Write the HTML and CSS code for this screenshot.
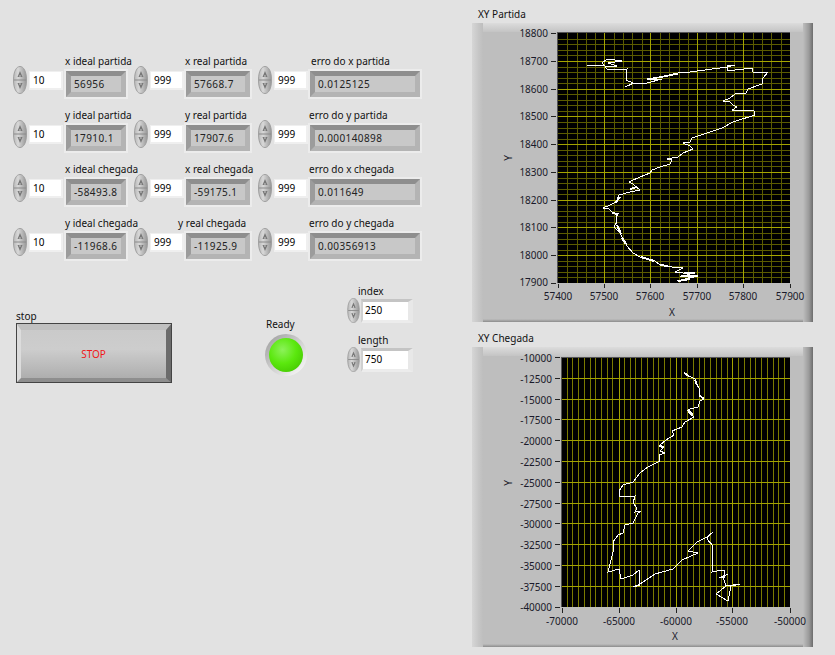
FILE: index.html
```html
<!DOCTYPE html>
<html lang="pt">
<head>
<meta charset="utf-8">
<title>XY Partida / XY Chegada</title>
<link rel="stylesheet" href="styles.css">
</head>
<body>
<svg class="defs" width="0" height="0" aria-hidden="true">
  <defs>
    <linearGradient id="spinfill" x1="0" x2="1" y1="0" y2="0">
      <stop offset="0" stop-color="#b8b8b8"/><stop offset=".35" stop-color="#d8d8d8"/><stop offset="1" stop-color="#969696"/>
    </linearGradient>
    <symbol id="spin" viewBox="0 0 14 28">
      <path d="M7 .5C10.500 .5 13.500 5 13.500 14S10.500 27.500 7 27.500 .5 23 .5 14 3.500 .5 7 .5Z" fill="url(#spinfill)" stroke="#a0a0a0"/>
      <path d="M1 14H13" stroke="#8a8a8a"/>
      <path d="M7 5 4.500 11H6.500V9H7.500V11H9.500Z" fill="#777"/>
      <path d="M7 23 4.500 17H6.500V19H7.500V17H9.500Z" fill="#777"/>
    </symbol>
  </defs>
</svg>
<main class="panel">
  <section class="left">
    <div class="controls">
      <div class="num"><svg class="spin"><use href="#spin"/></svg><span class="box">10</span></div>
      <div class="ind"><span class="lab">x ideal partida</span><output class="read r1">56956</output></div>
      <div class="num"><svg class="spin"><use href="#spin"/></svg><span class="box">999</span></div>
      <div class="ind"><span class="lab">x real partida</span><output class="read r2">57668.7</output></div>
      <div class="num"><svg class="spin"><use href="#spin"/></svg><span class="box">999</span></div>
      <div class="ind"><span class="lab off3">erro do x partida</span><output class="read r3">0.0125125</output></div>

      <div class="num"><svg class="spin"><use href="#spin"/></svg><span class="box">10</span></div>
      <div class="ind"><span class="lab">y ideal partida</span><output class="read r1">17910.1</output></div>
      <div class="num"><svg class="spin"><use href="#spin"/></svg><span class="box">999</span></div>
      <div class="ind"><span class="lab">y real partida</span><output class="read r2">17907.6</output></div>
      <div class="num"><svg class="spin"><use href="#spin"/></svg><span class="box">999</span></div>
      <div class="ind"><span class="lab">erro do y partida</span><output class="read r3">0.000140898</output></div>

      <div class="num"><svg class="spin"><use href="#spin"/></svg><span class="box">10</span></div>
      <div class="ind"><span class="lab">x ideal chegada</span><output class="read r1">-58493.8</output></div>
      <div class="num"><svg class="spin"><use href="#spin"/></svg><span class="box">999</span></div>
      <div class="ind"><span class="lab">x real chegada</span><output class="read r2">-59175.1</output></div>
      <div class="num"><svg class="spin"><use href="#spin"/></svg><span class="box">999</span></div>
      <div class="ind"><span class="lab">erro do x chegada</span><output class="read r3">0.011649</output></div>

      <div class="num"><svg class="spin"><use href="#spin"/></svg><span class="box">10</span></div>
      <div class="ind"><span class="lab">y ideal chegada</span><output class="read r1">-11968.6</output></div>
      <div class="num"><svg class="spin"><use href="#spin"/></svg><span class="box">999</span></div>
      <div class="ind"><span class="lab off2">y real chegada</span><output class="read r2">-11925.9</output></div>
      <div class="num"><svg class="spin"><use href="#spin"/></svg><span class="box">999</span></div>
      <div class="ind"><span class="lab">erro do y chegada</span><output class="read r3">0.00356913</output></div>
    </div>
    <div class="lower">
      <div class="stopgroup">
        <span class="lab">stop</span>
        <button class="stop" type="button">STOP</button>
      </div>
      <div class="ledgroup">
        <span class="lab">Ready</span>
        <div class="ledring"><div class="led"></div></div>
      </div>
      <div class="sidegroup">
        <div class="side">
          <span class="lab">index</span>
          <div class="sideRow"><svg class="spin small"><use href="#spin"/></svg><span class="box wide">250</span></div>
        </div>
        <div class="side">
          <span class="lab">length</span>
          <div class="sideRow"><svg class="spin small"><use href="#spin"/></svg><span class="box wide">750</span></div>
        </div>
      </div>
    </div>
  </section>
  <section class="right">
    <h2 class="gtitle">XY Partida</h2>
    <div class="graph">
      <svg class="plot" width="341" height="299" viewBox="472 23 341 299">
        <rect x="557" y="32" width="233" height="251" fill="#000"/>
        <path class="minor" d="M567 32V283M577 32V283M586 32V283M595 32V283M614 32V283M623 32V283M632 32V283M642 32V283M660 32V283M669 32V283M679 32V283M688 32V283M706 32V283M716 32V283M725 32V283M734 32V283M753 32V283M762 32V283M771 32V283M781 32V283M557 39H790M557 44H790M557 50H790M557 55H790M557 67H790M557 72H790M557 78H790M557 83H790M557 94H790M557 100H790M557 105H790M557 111H790M557 122H790M557 128H790M557 133H790M557 139H790M557 150H790M557 155H790M557 161H790M557 166H790M557 178H790M557 183H790M557 189H790M557 194H790M557 205H790M557 211H790M557 216H790M557 222H790M557 233H790M557 239H790M557 244H790M557 250H790M557 261H790M557 266H790M557 272H790M557 277H790"/>
        <path class="major" d="M604 32V283M650 32V283M697 32V283M743 32V283M557 61H790M557 89H790M557 116H790M557 144H790M557 172H790M557 200H790M557 227H790M557 255H790"/>
        <path class="edge" d="M557.500 283V32.500H790"/>
        <polyline class="trace" points="587,65 604,65 602,63 607,59 622,61 608,63 617,66 605,67 608,70 627,69 626,80 633,83 625,87 632,84 647,83 662,79 647,80 678,74 647,79 660,77 678,73 690,72 720,68 727,67 735,65 727,66 727,71 752,68 753,72 768,72 763,78 762,84 748,89 746,93 735,94 730,98 723,101 730,102 733,105 737,107 732,110 754,111 755,115 733,122 722,128 707,133 692,138 690,142 683,143 690,146 693,149 683,153 678,157 667,159 672,160 670,164 660,167 652,170 650,173 640,177 629,182 633,184 640,190 630,192 619,195 616,202 610,205 603,208 608,208 613,213 619,213 616,217 617,222 614,227 620,233 627,246 633,253 640,257 655,261 660,265 672,267 683,268 675,272 690,274 680,277 698,275 685,279 698,276 677,281"/>
        <path class="thick" d="M630 189 637 187M620 197 615 203M612 213 618 214M617 225 621 234M622 238 626 244M641 257 654 261M660 265 668 266M681 276 697 276M684 273 695 273M678 281 690 279"/>
        <path class="tick" d="M551 33H556M551 61H556M551 89H556M551 116H556M551 144H556M551 172H556M551 200H556M551 227H556M551 255H556M551 283H556M558 284V288M604 284V288M650 284V288M697 284V288M743 284V288M790 284V288"/>
        <g class="ylabels">
          <text x="548" y="37">18800</text><text x="548" y="65">18700</text><text x="548" y="93">18600</text><text x="548" y="120">18500</text><text x="548" y="148">18400</text><text x="548" y="176">18300</text><text x="548" y="204">18200</text><text x="548" y="231">18100</text><text x="548" y="259">18000</text><text x="548" y="286">17900</text>
        </g>
        <g class="xlabels">
          <text x="558" y="300">57400</text><text x="604" y="300">57500</text><text x="650" y="300">57600</text><text x="697" y="300">57700</text><text x="743" y="300">57800</text><text x="790" y="300">57900</text>
          <text x="672" y="316">X</text>
        </g>
        <text class="ytitle" transform="translate(512 158) rotate(-90)">Y</text>
      </svg>
    </div>
    <h2 class="gtitle second">XY Chegada</h2>
    <div class="graph tall">
      <svg class="plot" width="341" height="300" viewBox="472 347 341 300">
        <rect x="561" y="357" width="229" height="250" fill="#000"/>
        <path class="minor bright" d="M567 357V607M572 357V607M578 357V607M584 357V607M590 357V607M595 357V607M601 357V607M607 357V607M612 357V607M624 357V607M630 357V607M635 357V607M641 357V607M647 357V607M653 357V607M658 357V607M664 357V607M670 357V607M681 357V607M687 357V607M693 357V607M699 357V607M704 357V607M710 357V607M716 357V607M721 357V607M727 357V607M738 357V607M744 357V607M750 357V607M755 357V607M761 357V607M767 357V607M773 357V607M778 357V607M784 357V607"/>
        <path class="major" d="M619 357V607M676 357V607M732 357V607M561 378H790M561 399H790M561 419H790M561 440H790M561 461H790M561 482H790M561 503H790M561 523H790M561 544H790M561 565H790M561 586H790"/>
        <path class="edge" d="M561.500 607V357.500H790"/>
        <polyline class="trace" points="684,373 689,376 695,379 697,385 699,388 699,395 704,399 700,401 698,407 690,409 688,412 694,417 685,422 682,427 672,431 674,435 666,440 659,446 664,447 660,451 665,453 659,455 660,461 648,467 640,473 633,482 623,485 619,491 620,497 635,496 633,503 637,508 635,512 641,511 638,513 633,523 625,525 623,533 618,535 613,542 613,552 608,572 619,569 621,579 633,575 639,570 640,585 633,587 640,584 655,574 673,569 682,560 698,553 688,551 697,542 707,537 713,532 708,537 707,539 713,546 712,572 717,571 724,570 725,577 719,578 728,574 723,577 726,586 716,594 728,601 731,586 740,584 726,586"/>
        <path class="thick" d="M684 373 689 376M695 380 697 385M699 395 704 399M688 410 693 415M660 446 663 447"/>
        <path class="tick" d="M555 357H560M555 378H560M555 399H560M555 419H560M555 440H560M555 461H560M555 482H560M555 503H560M555 523H560M555 544H560M555 565H560M555 586H560M555 607H560M562 608V613M619 608V613M676 608V613M732 608V613M790 608V613"/>
        <g class="ylabels">
          <text x="552" y="362">-10000</text><text x="552" y="383">-12500</text><text x="552" y="404">-15000</text><text x="552" y="424">-17500</text><text x="552" y="445">-20000</text><text x="552" y="466">-22500</text><text x="552" y="487">-25000</text><text x="552" y="508">-27500</text><text x="552" y="528">-30000</text><text x="552" y="549">-32500</text><text x="552" y="570">-35000</text><text x="552" y="591">-37500</text><text x="552" y="611">-40000</text>
        </g>
        <g class="xlabels">
          <text x="562" y="625">-70000</text><text x="619" y="625">-65000</text><text x="676" y="625">-60000</text><text x="732" y="625">-55000</text><text x="790" y="625">-50000</text>
          <text x="675" y="640">X</text>
        </g>
        <text class="ytitle" transform="translate(512 483) rotate(-90)">Y</text>
      </svg>
    </div>
  </section>
</main>
</body>
</html>
```
FILE: styles.css
```css
* { box-sizing: border-box; }
html, body { margin: 0; height: 100%; overflow: hidden; }
body {
  background: #e2e2e2;
  color: #111;
  font: 10px/13px "Noto Sans", "Liberation Sans", sans-serif;
}
.defs { position: absolute; }
.panel { display: flex; width: 835px; height: 655px; }

/* left column */
.left { width: 472px; padding: 55px 0 0 13px; flex: none; }
.controls {
  display: grid;
  grid-template-columns: 51px 70px 50px 74px 50px 114px;
  grid-auto-rows: 44px;
  row-gap: 10px;
  justify-content: start;
}
.num { display: flex; align-items: center; gap: 2px; padding-top: 6px; }
.spin { width: 14px; height: 28px; flex: none; }
.spin.small { width: 13px; height: 25px; }
.box {
  display: block;
  width: 34px;
  height: 19px;
  padding: 2px 0 0 3px;
  background: #fff;
  border-style: solid;
  border-width: 1px 2px 2px 1px;
  border-color: #efefef;
  line-height: 13px;
  color: #000;
}
.box.wide {
  width: 52px;
  height: 24px;
  border-width: 3px 5px 3px 2px;
  border-color: #c4c4c4 #e8e8e8 #ececec #d0d0d0;
  padding: 2px 0 0 2px;
}
.ind { display: flex; flex-direction: column; }
.lab { display: block; height: 13px; margin-left: 1px; white-space: nowrap; }
.off2 { margin-left: -6px; }
.off3 { margin-left: 3px; }
.read {
  display: block;
  height: 31px;
  margin-top: 1px;
  padding: 2px 0 0 3px;
  background: #c8c8c8;
  border-style: solid;
  border-width: 7px;
  border-color: #8e8e8e #b4b4b4 #b4b4b4 #9c9c9c;
  outline: 2px solid #ececec;
  outline-offset: -2px;
  line-height: 13px;
  letter-spacing: .4px;
  color: #222;
}
.r1 { width: 64px; }
.r2 { width: 68px; }
.r3 { width: 114px; }

.lower { display: flex; align-items: flex-start; margin-top: 43px; padding-left: 3px; }
.stopgroup { width: 156px; padding-top: 6px; flex: none; }
.stopgroup .lab { margin-left: 0; height: 13px; }
.stop {
  display: block;
  width: 156px;
  height: 60px;
  margin-top: 0;
  padding: 0;
  font: inherit;
  color: #f01818;
  background: linear-gradient(#cacaca, #cdcdcd 40%, #aeaeae);
  border-style: solid;
  border-width: 7px 6px 5px 5px;
  border-color: #c0c0c0 #6c6c6c #8e8e8e #dcdcdc;
  outline: 1px solid #444;
  outline-offset: -1px;
}
.ledgroup { margin-left: 94px; width: 81px; padding-top: 14px; flex: none; }
.ledgroup .lab { height: 13px; margin-left: 0; }
.ledring {
  width: 42px;
  height: 42px;
  margin: 3px 0 0 -1px;
  padding: 4px;
  border-radius: 50%;
  background: linear-gradient(135deg, #9a9a9a, #d4d4d4 55%, #fff);
}
.led {
  width: 34px;
  height: 34px;
  border-radius: 50%;
  background: radial-gradient(circle at 40% 35%, #8cf25a, #5be80e 45%, #4ad004 75%, #329c02);
}
.sidegroup { display: flex; flex-direction: column; gap: 11px; margin-top: -19px; }
.side { width: 70px; }
.side .lab { margin-left: 11px; }
.sideRow { display: flex; align-items: center; gap: 1px; }

/* right column */
.right { flex: none; width: 341px; }
.gtitle {
  margin: 0;
  height: 23px;
  padding: 8px 0 0 6px;
  font: inherit;
  font-weight: 400;
}
.gtitle.second { height: 25px; padding-top: 10px; }
.graph {
  width: 341px;
  height: 299px;
  background:
    linear-gradient(90deg, #d6d6d6, #c6c6c6 60%, #bebebe 100%) left/11px 100% no-repeat,
    linear-gradient(90deg, #bebebe, #9a9a9a 60%, #6c6c6c 100%) right/10px 100% no-repeat,
    linear-gradient(#dcdcdc, #c4c4c4) top/100% 9px no-repeat,
    linear-gradient(#bebebe, #8c8c8c) bottom/100% 3px no-repeat,
    #bebebe;
}
.graph.tall { height: 300px; }
.plot { display: block; font: 10px "Noto Sans", "Liberation Sans", sans-serif; }
.minor { stroke: #5c5c00; fill: none; shape-rendering: crispEdges; }
.minor.bright { stroke: #7a7a00; }
.major { stroke: #a4a400; fill: none; shape-rendering: crispEdges; }
.edge { stroke: #555; fill: none; shape-rendering: crispEdges; }
.trace { fill: none; stroke: #fff; stroke-width: 1; stroke-linejoin: miter; shape-rendering: crispEdges; }
.thick { fill: none; stroke: #fff; stroke-width: 2; shape-rendering: crispEdges; }
.tick { stroke: #222; fill: none; shape-rendering: crispEdges; }
.ylabels text { text-anchor: end; fill: #1a1a2a; }
.xlabels text { text-anchor: middle; fill: #1a1a2a; }
.ytitle { text-anchor: middle; fill: #1a1a2a; }
```
